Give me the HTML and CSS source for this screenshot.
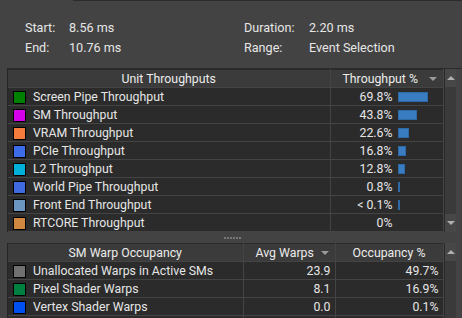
FILE: index.html
```html
<!DOCTYPE html>
<html lang="en">
<head>
    <meta charset="UTF-8">
    <title>Range Info</title>
    <link rel="stylesheet" href="styles.css">
</head>
<body>
    <div class="topline"></div>
    <div class="info">
        <span class="key">Start:</span><span class="val">8.56 ms</span>
        <span class="key">Duration:</span><span class="val">2.20 ms</span>
        <span class="key">End:</span><span class="val">10.76 ms</span>
        <span class="key">Range:</span><span class="val">Event Selection</span>
    </div>

    <div class="panel">
        <table class="grid units">
            <colgroup><col class="c-name"><col class="c-tp"></colgroup>
            <thead>
                <tr><th class="center">Unit Throughputs</th><th class="sort">Throughput %<span class="arrow"></span></th></tr>
            </thead>
            <tbody>
                <tr><td><span class="sw" style="background:#008000"></span>Screen Pipe Throughput</td><td class="tp"><span class="num">69.8%</span><span class="bar" style="width:30px"></span></td></tr>
                <tr><td><span class="sw" style="background:#d400ea"></span>SM Throughput</td><td class="tp"><span class="num">43.8%</span><span class="bar" style="width:19px"></span></td></tr>
                <tr><td><span class="sw" style="background:#f67c3d"></span>VRAM Throughput</td><td class="tp"><span class="num">22.6%</span><span class="bar" style="width:11px"></span></td></tr>
                <tr><td><span class="sw" style="background:#3d6ce8"></span>PCIe Throughput</td><td class="tp"><span class="num">16.8%</span><span class="bar" style="width:8px"></span></td></tr>
                <tr><td><span class="sw" style="background:#00b0d8"></span>L2 Throughput</td><td class="tp"><span class="num">12.8%</span><span class="bar" style="width:7px"></span></td></tr>
                <tr><td><span class="sw" style="background:#3f6ae0"></span>World Pipe Throughput</td><td class="tp"><span class="num">0.8%</span><span class="bar" style="width:2px"></span></td></tr>
                <tr><td><span class="sw" style="background:#6b96c0"></span>Front End Throughput</td><td class="tp"><span class="num">&lt; 0.1%</span><span class="bar" style="width:2px"></span></td></tr>
                <tr><td><span class="sw" style="background:#d08840"></span>RTCORE Throughput</td><td class="tp"><span class="num">0%</span><span class="bar none"></span></td></tr>
            </tbody>
        </table>
        <div class="scroll">
            <div class="sbtn up"></div>
            <div class="track"></div>
            <div class="sbtn down"></div>
        </div>
    </div>

    <div class="splitter"><span class="dots"></span></div>

    <div class="panel second">
        <table class="grid warps">
            <colgroup><col class="c-wname"><col class="c-avg"><col class="c-occ"></colgroup>
            <thead>
                <tr><th class="center">SM Warp Occupancy</th><th class="sort">Avg Warps<span class="arrow"></span></th><th class="center">Occupancy %</th></tr>
            </thead>
            <tbody>
                <tr><td><span class="sw" style="background:#707070"></span>Unallocated Warps in Active SMs</td><td class="r">23.9</td><td class="r">49.7%</td></tr>
                <tr><td><span class="sw" style="background:#008040"></span>Pixel Shader Warps</td><td class="r">8.1</td><td class="r">16.9%</td></tr>
                <tr><td><span class="sw" style="background:#0050f0"></span>Vertex Shader Warps</td><td class="r">0.0</td><td class="r">0.1%</td></tr>
                <tr><td><span class="sw" style="background:#303030"></span></td><td></td><td></td></tr>
            </tbody>
        </table>
        <div class="scroll">
            <div class="sbtn up"></div>
            <div class="track"></div>
        </div>
    </div>
</body>
</html>
```

FILE: styles.css
```css
html, body {
    margin: 0;
    padding: 0;
    height: 318px;
    overflow: hidden;
}

body {
    background: #434343;
    font-family: Roboto, 'Liberation Sans', sans-serif;
    font-size: 12.3px;
    color: #e6e6e6;
}

.topline {
    height: 1px;
    margin-left: 73px;
    background: #2c2c2c;
}

/* Range summary */
.info {
    display: grid;
    grid-template-columns: 44px 175px 65px auto;
    grid-auto-rows: 20px;
    align-items: center;
    padding-top: 16px;
    height: 51px;
    border-bottom: 1px solid #2c2c2c;
    margin-left: 7px;
    padding-left: 18px;
    font-size: 12.6px;
}

/* Tables */
.panel {
    display: flex;
    margin-left: 7px;
    width: 448px;
    border-left: 1px solid #262626;
}

.grid {
    width: 435px;
    border-collapse: collapse;
    table-layout: fixed;
}

.grid tr { height: 18px; }

.grid th, .grid td {
    padding: 0;
    white-space: nowrap;
    overflow: hidden;
    border: 1px solid #444444;
    line-height: 16px;
}

.grid tr > :first-child { border-left: none; }

.grid th {
    background: #3b3b3b;
    font-weight: normal;
    color: #ececec;
    border-top: 1px solid #2a2a2a;
}

.grid td {
    background: #2b2b2b;
}

.center { text-align: center; }

.sort {
    text-align: left;
    padding-left: 12px !important;
    position: relative;
}

.arrow {
    position: absolute;
    right: 6px;
    top: 7px;
    border-left: 4px solid transparent;
    border-right: 4px solid transparent;
    border-top: 4px solid #9a9a9a;
}

.sw {
    display: inline-block;
    width: 11px;
    height: 11px;
    border: 1px solid #000;
    margin: 0 7px 0 5px;
    vertical-align: -3px;
}

.c-name { width: 322px; }
.c-tp { width: 113px; }

.tp .num {
    display: inline-block;
    width: 62px;
    text-align: right;
}

.bar {
    display: inline-block;
    height: 10px;
    margin-left: 5px;
    background: #3a7cc2;
    border: 1px solid #2f6aa8;
    box-sizing: border-box;
    vertical-align: -1px;
}

.bar.none { border: none; background: none; }

.c-wname { width: 235px; }
.c-avg { width: 92px; }
.c-occ { width: 108px; }

.r {
    text-align: right;
    padding-right: 4px !important;
}

/* Scroll bars */
.scroll {
    width: 13px;
    display: flex;
    flex-direction: column;
    background: #3a3a3a;
    border-left: 1px solid #2a2a2a;
}

.track { flex: 1; }

.sbtn {
    height: 18px;
    background: #474747;
    position: relative;
}

.sbtn::after {
    content: "";
    position: absolute;
    left: 2px;
    top: 7px;
    border-left: 4px solid transparent;
    border-right: 4px solid transparent;
}

.sbtn.up::after { border-bottom: 4px solid #b0b0b0; }
.sbtn.down::after { border-top: 4px solid #b0b0b0; }

.second .scroll { height: 80px; }

/* Splitter */
.splitter {
    height: 11px;
    display: flex;
    justify-content: center;
    align-items: center;
}

.dots {
    width: 17px;
    height: 2px;
    background: repeating-linear-gradient(90deg, #777 0 2px, transparent 2px 3px);
    margin-left: 2px;
}
```
